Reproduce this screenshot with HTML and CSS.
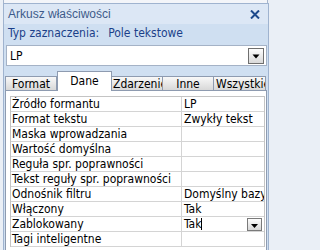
FILE: index.html
```html
<!DOCTYPE html>
<html lang="pl">
<head>
<meta charset="utf-8">
<title>Arkusz właściwości</title>
<link rel="stylesheet" href="styles.css">
</head>
<body>
<div class="top-frame"></div>
<div class="panel">
  <div class="titlebar">
    <span class="title">Arkusz właściwości</span>
    <svg class="close" width="10" height="9" viewBox="0 0 10 9"><path d="M1 0.5 L9 8.5 M9 0.5 L1 8.5" stroke="#1e4a8c" stroke-width="2"/></svg>
  </div>
  <div class="seltype"><span>Typ zaznaczenia:</span><span class="seltype-val">Pole tekstowe</span></div>
  <div class="combo">
    <span class="combo-text">LP</span>
    <span class="dd-btn"><svg width="8" height="5" viewBox="0 0 8 5"><path d="M0.5 0.5 H7.5 L4 4.5 Z" fill="#000"/></svg></span>
  </div>
  <div class="tabs">
    <div class="tab t-format">Format</div>
    <div class="tab t-dane active">Dane</div>
    <div class="tab t-zd">Zdarzenie</div>
    <div class="tab t-inne">Inne</div>
    <div class="tab t-wsz">Wszystkie</div>
  </div>
  <div class="page">
    <div class="grid">
      <div class="row"><div class="key">Źródło formantu</div><div class="val">LP</div></div>
      <div class="row"><div class="key">Format tekstu</div><div class="val">Zwykły tekst</div></div>
      <div class="row"><div class="key">Maska wprowadzania</div><div class="val"></div></div>
      <div class="row"><div class="key">Wartość domyślna</div><div class="val"></div></div>
      <div class="row"><div class="key">Reguła spr. poprawności</div><div class="val"></div></div>
      <div class="row"><div class="key">Tekst reguły spr. poprawności</div><div class="val"></div></div>
      <div class="row"><div class="key">Odnośnik filtru</div><div class="val">Domyślny bazy danych</div></div>
      <div class="row"><div class="key">Włączony</div><div class="val">Tak</div></div>
      <div class="row"><div class="key">Zablokowany</div><div class="val"><span>Tak</span><span class="caret"></span><span class="mini-btn"><svg width="7" height="4" viewBox="0 0 7 4"><path d="M0 0 H7 L3.5 4 Z" fill="#000"/></svg></span></div></div>
      <div class="row"><div class="key">Tagi inteligentne</div><div class="val"></div></div>
    </div>
  </div>
</div>
</body>
</html>
```
FILE: styles.css
```css
* { box-sizing: border-box; }
html, body { margin: 0; padding: 0; }
body {
  width: 272px;
  height: 250px;
  overflow: hidden;
  background: #eaeff6;
  font-family: "DejaVu Sans Condensed", "DejaVu Sans", sans-serif;
  font-size: 12px;
  color: #000;
}
.top-frame {
  height: 3px;
  margin-left: 3px;
  width: 265px;
  border-left: 1px solid #a7b6cc;
  border-right: 1px solid #a7b6cc;
  background: #f3f5f9;
}
.panel {
  margin-left: 3px;
  width: 266px;
  height: 247px;
  border: 1px solid #9fb3cf;
  border-bottom: none;
  background: #cfdff1;
}
.titlebar {
  height: 20px;
  background: #dce7f5;
  display: flex;
  align-items: center;
  justify-content: space-between;
  padding: 0 8px 0 4px;
}
.title {
  font-family: "Liberation Sans", Arial, sans-serif;
  font-size: 12px;
  color: #3e5b8a;
}
.close { display: block; }
.seltype {
  height: 17px;
  padding-left: 4px;
  display: flex;
  align-items: center;
  gap: 9px;
  color: #1b3f89;
}
.combo {
  margin: 4px 0 0 2px;
  width: 261px;
  height: 21px;
  background: #fff;
  border: 1px solid #a4b2c6;
  display: flex;
  align-items: center;
  justify-content: space-between;
  padding: 0 2px 0 3px;
}
.dd-btn {
  width: 16px;
  height: 16px;
  border: 1px solid #6f6f6f;
  background: linear-gradient(#fdfdfd, #d9d9d9);
  display: flex;
  align-items: center;
  justify-content: center;
}
.dd-btn svg { display: block; margin-top: 1px; }
.tabs {
  display: flex;
  align-items: flex-end;
  height: 19px;
  margin: 5px 0 0 1px;
  position: relative;
  z-index: 1;
}
.tab {
  height: 14px;
  border: 1px solid #8e9bb0;
  border-bottom: none;
  background: linear-gradient(#f8f8f8, #d8d8d8);
  text-align: center;
  overflow: hidden;
  white-space: nowrap;
  line-height: 14px;
  padding: 0 1px;
}
.tab + .tab { border-left: none; }
.tab.active {
  height: 20px;
  background: #fff;
  margin-bottom: -1px;
  line-height: 18px;
  border-left: 1px solid #8e9bb0;
}
.t-format { width: 52px; }
.t-dane { width: 55px; }
.t-zd { width: 51px; border-left: 1px solid #8e9bb0; text-align: left; padding-left: 1px; }
.t-inne { width: 51px; }
.t-wsz { width: 52px; text-align: left; padding-left: 2px; }
.page {
  margin-left: 1px;
  width: 262px;
  height: 170px;
  background: #fff;
  border: 1px solid #8e9bb0;
  border-bottom: none;
  padding: 5px 0 0 4px;
}
.grid {
  width: 255px;
  border: 1px solid #c4c4c4;
  border-bottom: none;
}
.row {
  display: flex;
  height: 15px;
  border-bottom: 1px solid #d4d4d4;
  line-height: 15px;
}
.key {
  width: 171px;
  border-right: 1px solid #d4d4d4;
  padding-left: 1px;
  white-space: nowrap;
  overflow: hidden;
}
.val {
  flex: 1;
  display: flex;
  align-items: center;
  padding-left: 2px;
  white-space: nowrap;
  overflow: hidden;
}
.caret {
  display: inline-block;
  width: 1px;
  height: 12px;
  background: #000;
}
.mini-btn {
  margin-left: auto;
  margin-right: 2px;
  width: 15px;
  height: 13px;
  border: 1px solid #7a7a7a;
  background: linear-gradient(#fdfdfd, #d6d6d6);
  display: flex;
  align-items: flex-end;
  justify-content: center;
  padding-bottom: 2px;
}
.mini-btn svg { display: block; }
```
